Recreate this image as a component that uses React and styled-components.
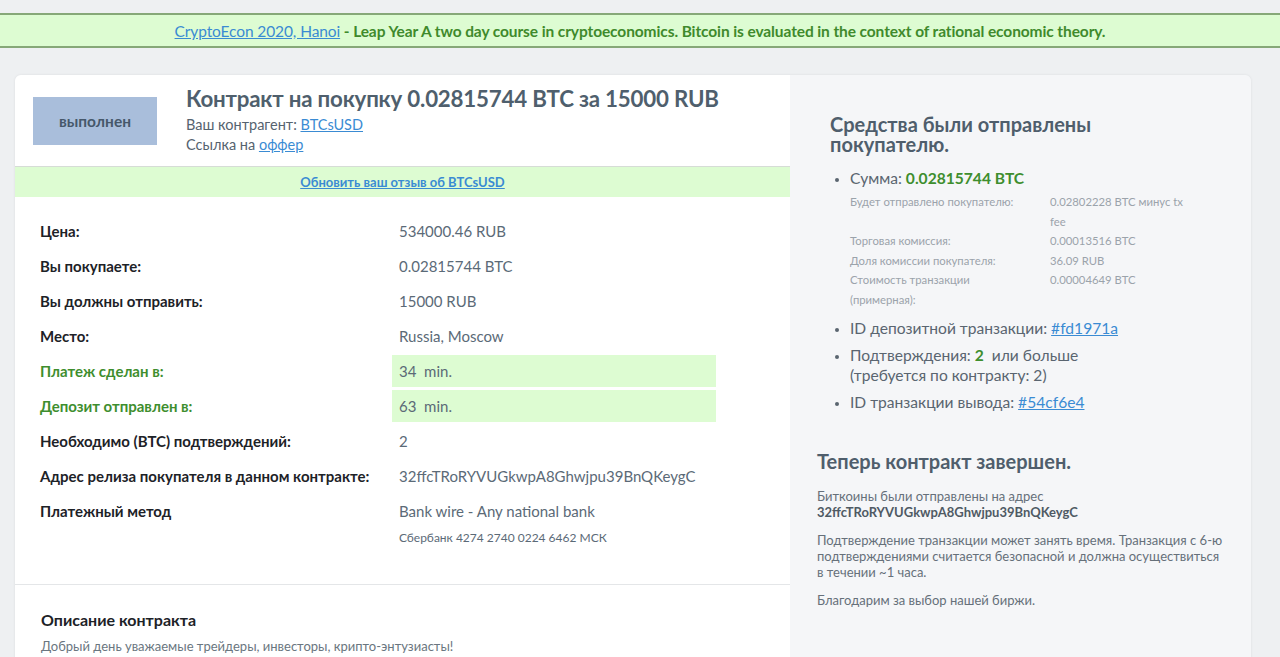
import styled, { createGlobalStyle } from "styled-components";

const GlobalStyle = createGlobalStyle`
  html, body {
    margin: 0;
    padding: 0;
    background: #eef0f2;
    font-family: Lato, "Open Sans", "Noto Sans", sans-serif;
  }
  * { box-sizing: border-box; }
`;

const Page = styled.div`
  padding-top: 13px;
  height: 657px;
  overflow: hidden;
`;

const Banner = styled.div`
  background: #ddfcd2;
  border-top: 2px solid #86a878;
  border-bottom: 2px solid #86a878;
  height: 35px;
  display: flex;
  align-items: center;
  justify-content: center;
  color: #3f8a2c;
  font-size: 15.5px;
  font-weight: 700;
  letter-spacing: -0.1px;
`;

const Link = styled.a`
  color: ${(p) => p.color || "#3a8bd3"};
  text-decoration: underline;
  font-weight: ${(p) => (p.bold ? 700 : "inherit")};
  cursor: pointer;
`;

const Card = styled.div`
  margin: 27px 29px 0 15px;
  display: grid;
  grid-template-columns: 775px 1fr;
  border-radius: 6px;
  overflow: hidden;
  box-shadow: 0 0 3px rgba(0, 0, 0, 0.08);
  min-height: 600px;
`;

const Main = styled.div`
  background: #fff;
`;

const Header = styled.div`
  display: flex;
  align-items: center;
  padding: 11px 18px;
  height: 91px;
`;

const Status = styled.div`
  width: 124px;
  height: 48px;
  background: #a9bedb;
  color: #46586a;
  font-weight: 700;
  font-size: 15.5px;
  display: flex;
  align-items: center;
  justify-content: center;
  margin-right: 29px;
`;

const Title = styled.h1`
  margin: 0 0 3px;
  font-size: 22.3px;
  line-height: 26px;
  font-weight: 700;
  color: #4f5f6d;
  letter-spacing: -0.2px;
`;

const SubLine = styled.div`
  font-size: 14.5px;
  line-height: 20px;
  color: #56636f;
`;

const FeedbackBar = styled.div`
  height: 31px;
  background: #ddfcd2;
  border-top: 1px solid #d6dcd6;
  display: flex;
  align-items: center;
  justify-content: center;
  font-size: 13px;
`;

const Details = styled.div`
  display: grid;
  grid-template-columns: 352px 324px;
  grid-auto-rows: 32px;
  row-gap: 3px;
  padding: 18px 0 22px 25px;
  border-bottom: 1px solid #e4e6e8;
`;

const Label = styled.div`
  display: flex;
  align-items: center;
  font-size: 15px;
  font-weight: 700;
  color: ${(p) => (p.green ? "#3e8e2e" : "#1d2227")};
`;

const Value = styled.div`
  display: flex;
  align-items: center;
  padding-left: 7px;
  font-size: 15px;
  white-space: pre;
  color: #5b6a77;
  background: ${(p) => (p.green ? "#ddfcd2" : "transparent")};
`;

const Note = styled.div`
  grid-column: 2;
  padding-left: 7px;
  font-size: 12px;
  line-height: 16px;
  color: #5b6a77;
`;

const Description = styled.div`
  padding: 24px 26px;
`;

const DescTitle = styled.h3`
  margin: 0 0 7px;
  font-size: 16px;
  line-height: 22px;
  font-weight: 700;
  color: #1d2227;
`;

const DescText = styled.p`
  margin: 0;
  font-size: 13px;
  line-height: 16px;
  color: #6a7680;
`;

const Side = styled.div`
  background: #f5f6f8;
  padding: 40px 26px 0 27px;
  color: #5a6570;
`;

const SentBlock = styled.div`
  margin-left: 13px;
`;

const SideTitle = styled.h2`
  margin: 0 0 14px;
  font-size: 20px;
  line-height: 19.5px;
  font-weight: 700;
  color: #4f5e6c;
  max-width: 300px;
`;

const List = styled.ul`
  margin: 0;
  padding-left: 20px;
  list-style: disc;
`;

const Item = styled.li`
  font-size: 15.6px;
  line-height: 20px;
  margin-bottom: 7px;
  &::marker {
    font-size: 13px;
  }
`;

const Green = styled.b`
  color: #3e8e2e;
`;

const FeeTable = styled.div`
  display: grid;
  grid-template-columns: 200px 142px;
  font-size: 11.3px;
  line-height: 19.5px;
  color: #9ba3ab;
  margin-top: 4px;
  margin-bottom: 9px;
`;

const FeeLabel = styled.div`
  padding-right: 36px;
`;

const DoneTitle = styled.h2`
  margin: 37px 0 15px;
  font-size: 20px;
  line-height: 24px;
  font-weight: 700;
  color: #4f5e6c;
`;

const Para = styled.p`
  margin: 0 0 12px;
  font-size: 13px;
  line-height: 16px;
  color: #66707a;
`;

const Address = styled.b`
  color: #4f5a64;
`;

const rows = [
  ["Цена:", "534000.46 RUB"],
  ["Вы покупаете:", "0.02815744 BTC"],
  ["Вы должны отправить:", "15000 RUB"],
  ["Место:", "Russia, Moscow"],
  ["Платеж сделан в:", "34  min.", true],
  ["Депозит отправлен в:", "63  min.", true],
  ["Необходимо (BTC) подтверждений:", "2"],
  ["Адрес релиза покупателя в данном контракте:", "32ffcTRoRYVUGkwpA8Ghwjpu39BnQKeygC"],
  ["Платежный метод", "Bank wire - Any national bank"],
];

const fees = [
  ["Будет отправлено покупателю:", "0.02802228 BTC минус tx fee"],
  ["Торговая комиссия:", "0.00013516 BTC"],
  ["Доля комиссии покупателя:", "36.09 RUB"],
  ["Стоимость транзакции (примерная):", "0.00004649 BTC"],
];

const App = () => {
  return (
    <Page>
      <GlobalStyle />
      <Banner>
        <Link color="#3a8bd3" style={{ fontWeight: 400 }}>
          CryptoEcon 2020, Hanoi
        </Link>
        &nbsp;- Leap Year A two day course in cryptoeconomics. Bitcoin is
        evaluated in the context of rational economic theory.
      </Banner>
      <Card>
        <Main>
          <Header>
            <Status>выполнен</Status>
            <div>
              <Title>Контракт на покупку 0.02815744 BTC за 15000 RUB</Title>
              <SubLine>
                Ваш контрагент: <Link>BTCsUSD</Link>
              </SubLine>
              <SubLine>
                Ссылка на <Link>оффер</Link>
              </SubLine>
            </div>
          </Header>
          <FeedbackBar>
            <Link bold>Обновить ваш отзыв об BTCsUSD</Link>
          </FeedbackBar>
          <Details>
            {rows.map(([label, value, green]) => [
              <Label key={label} green={green}>
                {label}
              </Label>,
              <Value key={label + "v"} green={green}>
                {value}
              </Value>,
            ])}
            <Note>Сбербанк 4274 2740 0224 6462 МСК</Note>
          </Details>
          <Description>
            <DescTitle>Описание контракта</DescTitle>
            <DescText>
              Добрый день уважаемые трейдеры, инвесторы, крипто-энтузиасты!
            </DescText>
          </Description>
        </Main>
        <Side>
          <SentBlock>
            <SideTitle>Средства были отправлены покупателю.</SideTitle>
            <List>
              <Item>
                Сумма: <Green>0.02815744 BTC</Green>
                <FeeTable>
                  {fees.map(([k, v]) => [
                    <FeeLabel key={k}>{k}</FeeLabel>,
                    <div key={k + "v"}>{v}</div>,
                  ])}
                </FeeTable>
              </Item>
              <Item>
                ID депозитной транзакции: <Link>#fd1971a</Link>
              </Item>
              <Item>
                Подтверждения: <Green>2</Green>&nbsp; или больше
                <br />
                (требуется по контракту: 2)
              </Item>
              <Item>
                ID транзакции вывода: <Link>#54cf6e4</Link>
              </Item>
            </List>
          </SentBlock>
          <DoneTitle>Теперь контракт завершен.</DoneTitle>
          <Para>
            Биткоины были отправлены на адрес
            <br />
            <Address>32ffcTRoRYVUGkwpA8Ghwjpu39BnQKeygC</Address>
          </Para>
          <Para>
            Подтверждение транзакции может занять время. Транзакция с 6-ю
            подтверждениями считается безопасной и должна осуществиться в
            течении ~1 часа.
          </Para>
          <Para>Благодарим за выбор нашей биржи.</Para>
        </Side>
      </Card>
    </Page>
  );
};

export default App;
